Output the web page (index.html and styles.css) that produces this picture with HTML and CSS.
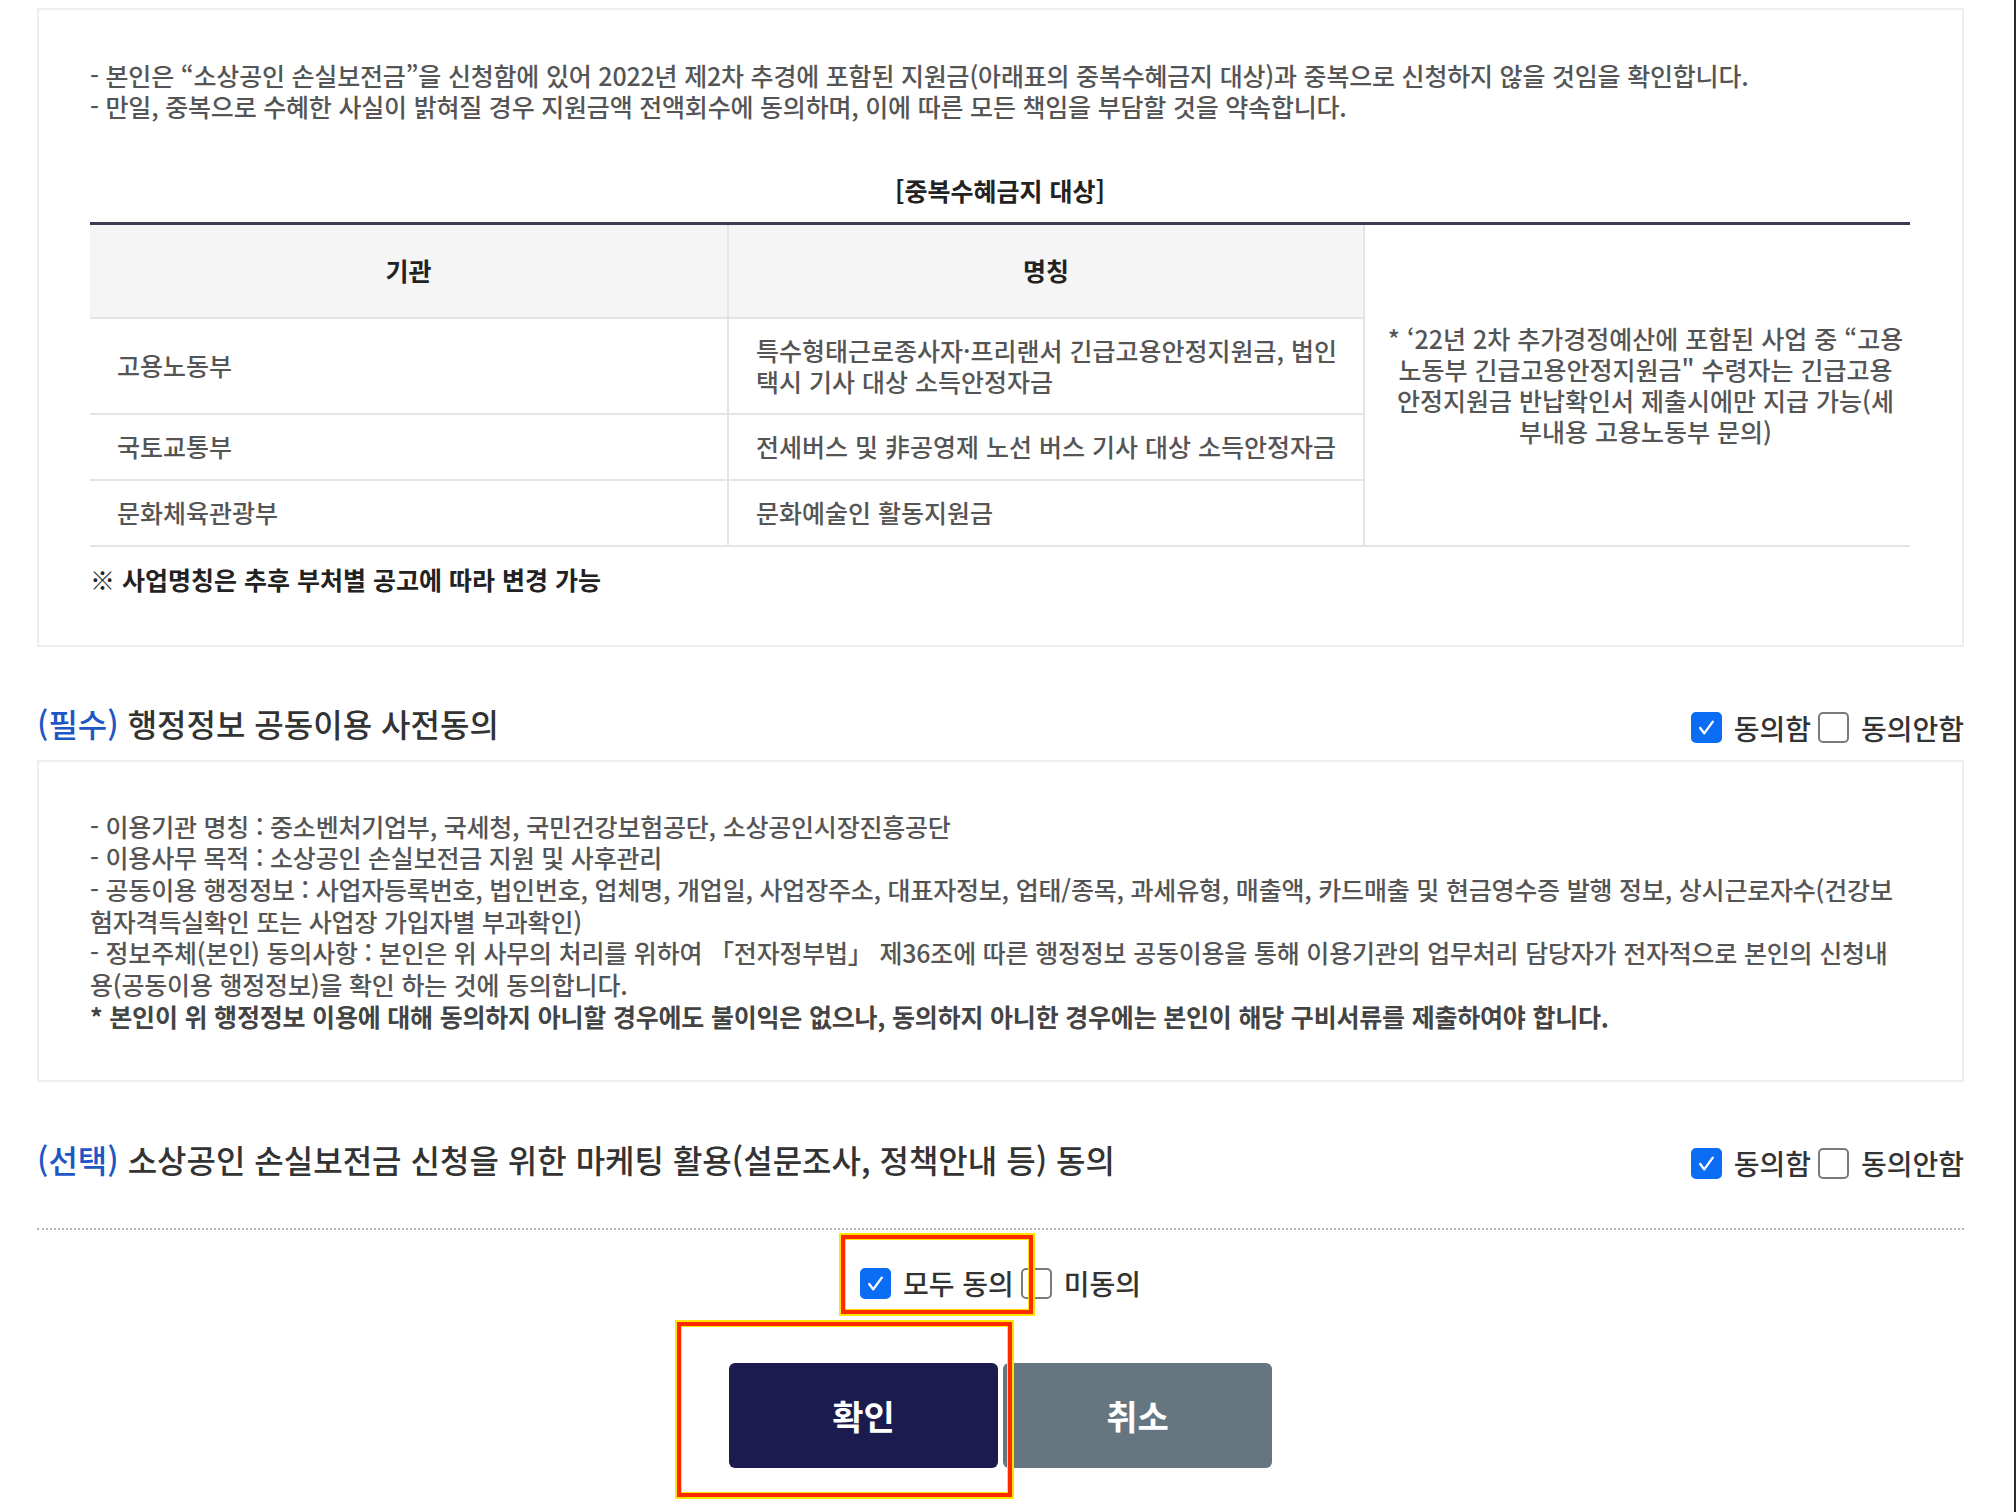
FILE: index.html
```html
<!DOCTYPE html>
<html lang="ko">
<head>
<meta charset="utf-8">
<title>중복수혜 확인 및 동의</title>
<link rel="stylesheet" href="styles.css">
</head>
<body>
<div class="page">
  <div class="box box1">
    <div class="intro">
      <p>- 본인은 “소상공인 손실보전금”을 신청함에 있어 2022년 제2차 추경에 포함된 지원금(아래표의 중복수혜금지 대상)과 중복으로 신청하지 않을 것임을 확인합니다.</p>
      <p>- 만일, 중복으로 수혜한 사실이 밝혀질 경우 지원금액 전액회수에 동의하며, 이에 따른 모든 책임을 부담할 것을 약속합니다.</p>
    </div>
    <div class="caption">[중복수혜금지 대상]</div>
    <table class="tbl">
      <colgroup><col class="c1"><col class="c2"><col class="c3"></colgroup>
      <tr class="r0">
        <th>기관</th>
        <th>명칭</th>
        <td class="side" rowspan="4">* ‘22년 2차 추가경정예산에 포함된 사업 중 “고용<br>노동부 긴급고용안정지원금" 수령자는 긴급고용<br>안정지원금 반납확인서 제출시에만 지급 가능(세<br>부내용 고용노동부 문의)</td>
      </tr>
      <tr class="r1">
        <td>고용노동부</td>
        <td>특수형태근로종사자·프리랜서 긴급고용안정지원금, 법인<br>택시 기사 대상 소득안정자금</td>
      </tr>
      <tr class="r2">
        <td>국토교통부</td>
        <td>전세버스 및 非공영제 노선 버스 기사 대상 소득안정자금</td>
      </tr>
      <tr class="r3">
        <td>문화체육관광부</td>
        <td>문화예술인 활동지원금</td>
      </tr>
    </table>
    <div class="note">※ 사업명칭은 추후 부처별 공고에 따라 변경 가능</div>
  </div>

  <div class="sec-head first">
    <div class="sec-title"><span class="req">(필수)</span> 행정정보 공동이용 사전동의</div>
    <div class="agree">
      <span class="cb on"><svg viewBox="0 0 30 30"><path d="M8 15.5 L12.5 21.5 L22 8.5"/></svg></span><span class="lbl">동의함</span>
      <span class="cb"></span><span class="lbl">동의안함</span>
    </div>
  </div>

  <div class="box box2">
    <p>- 이용기관 명칭 : 중소벤처기업부, 국세청, 국민건강보험공단, 소상공인시장진흥공단</p>
    <p>- 이용사무 목적 : 소상공인 손실보전금 지원 및 사후관리</p>
    <p>- 공동이용 행정정보 : 사업자등록번호, 법인번호, 업체명, 개업일, 사업장주소, 대표자정보, 업태/종목, 과세유형, 매출액, 카드매출 및 현금영수증 발행 정보, 상시근로자수(건강보<br>험자격득실확인 또는 사업장 가입자별 부과확인)</p>
    <p>- 정보주체(본인) 동의사항 : 본인은 위 사무의 처리를 위하여 「전자정부법」 제36조에 따른 행정정보 공동이용을 통해 이용기관의 업무처리 담당자가 전자적으로 본인의 신청내<br>용(공동이용 행정정보)을 확인 하는 것에 동의합니다.</p>
    <p class="strong">* 본인이 위 행정정보 이용에 대해 동의하지 아니할 경우에도 불이익은 없으나, 동의하지 아니한 경우에는 본인이 해당 구비서류를 제출하여야 합니다.</p>
  </div>

  <div class="sec-head second">
    <div class="sec-title"><span class="req">(선택)</span> 소상공인 손실보전금 신청을 위한 마케팅 활용(설문조사, 정책안내 등) 동의</div>
    <div class="agree">
      <span class="cb on"><svg viewBox="0 0 30 30"><path d="M8 15.5 L12.5 21.5 L22 8.5"/></svg></span><span class="lbl">동의함</span>
      <span class="cb"></span><span class="lbl">동의안함</span>
    </div>
  </div>

  <div class="divider"></div>

  <div class="all">
    <span class="cb on"><svg viewBox="0 0 30 30"><path d="M8 15.5 L12.5 21.5 L22 8.5"/></svg></span><span class="lbl">모두 동의</span>
    <span class="cb"></span><span class="lbl">미동의</span>
  </div>

  <div class="btns">
    <button class="btn ok">확인</button>
    <button class="btn cancel">취소</button>
  </div>

  <div class="hl hl1"></div>
  <div class="hl hl2"></div>
  <div class="edge"></div>
</div>
</body>
</html>
```

FILE: styles.css
```css
html, body {
  margin: 0;
  padding: 0;
  background: #fff;
  overflow: hidden;
}
body {
  font-family: "Noto Sans CJK KR", "Noto Sans", sans-serif;
  color: #555;
}
.page {
  position: relative;
  width: 2016px;
  height: 1512px;
  box-sizing: border-box;
  padding: 8px 52px 0 37px;
}
.box {
  border: 2px solid #eeeeee;
}
.box1 {
  padding: 50px 52px 48px 51px;
}
.intro p {
  margin: 0;
  font-size: 25px;
  font-weight: 500;
  line-height: 31px;
  color: #555;
  letter-spacing: -0.2px;
  white-space: nowrap;
}
.caption {
  margin: 53px 0 16px;
  text-align: center;
  font-weight: 700;
  color: #222;
  font-size: 25px;
  line-height: 31px;
}
.tbl {
  width: 100%;
  table-layout: fixed;
  border-collapse: collapse;
  border-top: 3px solid #3a3c52;
  border-bottom: 2px solid #e4e4e4;
  font-size: 25px;
  font-weight: 500;
  line-height: 31px;
  color: #555;
}
.c1 { width: 638px; }
.c2 { width: 636px; }
.c3 { width: 546px; }
.tbl th {
  background: #f5f5f5;
  font-weight: 700;
  color: #222;
  text-align: center;
  border-right: 2px solid #e4e4e4;
  border-bottom: 2px solid #e4e4e4;
  padding: 0;
}
.tbl td {
  padding: 0 10px 0 27px;
  border-right: 2px solid #e4e4e4;
  border-bottom: 2px solid #e4e4e4;
  white-space: nowrap;
}
.tbl td.side {
  border-right: none;
  text-align: center;
  vertical-align: middle;
  padding: 0 0 0 16px;
  white-space: nowrap;
}
.r0 { height: 94px; }
.r1 { height: 96px; }
.r2 { height: 66px; }
.r3 { height: 66px; }
.note {
  margin-top: 17px;
  padding-bottom: 2px;
  font-weight: 700;
  color: #222;
  font-size: 25px;
  line-height: 31px;
}
.sec-head {
  display: flex;
  justify-content: space-between;
  align-items: center;
  height: 40px;
}
.sec-head.first { margin-top: 61px; }
.sec-head.second { margin-top: 61px; }
.sec-title {
  font-size: 32px;
  font-weight: 500;
  color: #333;
  line-height: 40px;
  padding-bottom: 9px;
}
.sec-title .req {
  color: #1f56c6;
}
.agree, .all {
  display: flex;
  align-items: center;
  font-size: 28px;
  font-weight: 500;
  color: #333;
}
.cb {
  display: inline-block;
  width: 31px;
  height: 31px;
  box-sizing: border-box;
  border: 2px solid #7a7a7a;
  border-radius: 5px;
  background: #fff;
  margin-right: 12px;
  flex: none;
}
.cb.on {
  background: #0b6cf4;
  border-color: #0b6cf4;
}
.cb svg {
  display: block;
  width: 100%;
  height: 100%;
}
.cb svg path {
  fill: none;
  stroke: #fff;
  stroke-width: 2.6;
  stroke-linecap: round;
  stroke-linejoin: round;
}
.lbl {
  margin-right: 7px;
}
.lbl:last-child {
  margin-right: 0;
}
.box2 {
  margin-top: 12px;
  padding: 49px 52px 48px 51px;
}
.box2 p {
  margin: 0;
  font-size: 25px;
  font-weight: 500;
  line-height: 31.7px;
  color: #555;
  letter-spacing: -0.2px;
  white-space: nowrap;
}
.box2 p.strong {
  font-weight: 700;
  color: #444;
}
.divider {
  margin-top: 45px;
  border-top: 2px dotted #b4b4b4;
}
.all {
  justify-content: center;
  margin-top: 33px;
  height: 40px;
}
.btns {
  display: flex;
  justify-content: center;
  gap: 5px;
  margin-top: 60px;
}
.btn {
  width: 269px;
  height: 105px;
  border: none;
  border-radius: 6px;
  color: #fff;
  font-family: "Noto Sans CJK KR", "Noto Sans", sans-serif;
  font-size: 34px;
  font-weight: 700;
  padding: 0;
}
.btn.ok { background: #1b1b50; }
.btn.cancel { background: #657680; }
.hl {
  position: absolute;
  box-sizing: border-box;
  border: 4px solid #ff2a00;
  outline: 2px solid #ffe600;
  box-shadow: inset 0 0 0 1px #ffe600;
}
.hl1 {
  left: 841px;
  top: 1235px;
  width: 192px;
  height: 79px;
}
.hl2 {
  left: 677px;
  top: 1322px;
  width: 335px;
  height: 175px;
}
.edge {
  position: absolute;
  right: 0;
  top: 0;
  width: 2px;
  height: 1512px;
  background: #2c2c2c;
}
```
